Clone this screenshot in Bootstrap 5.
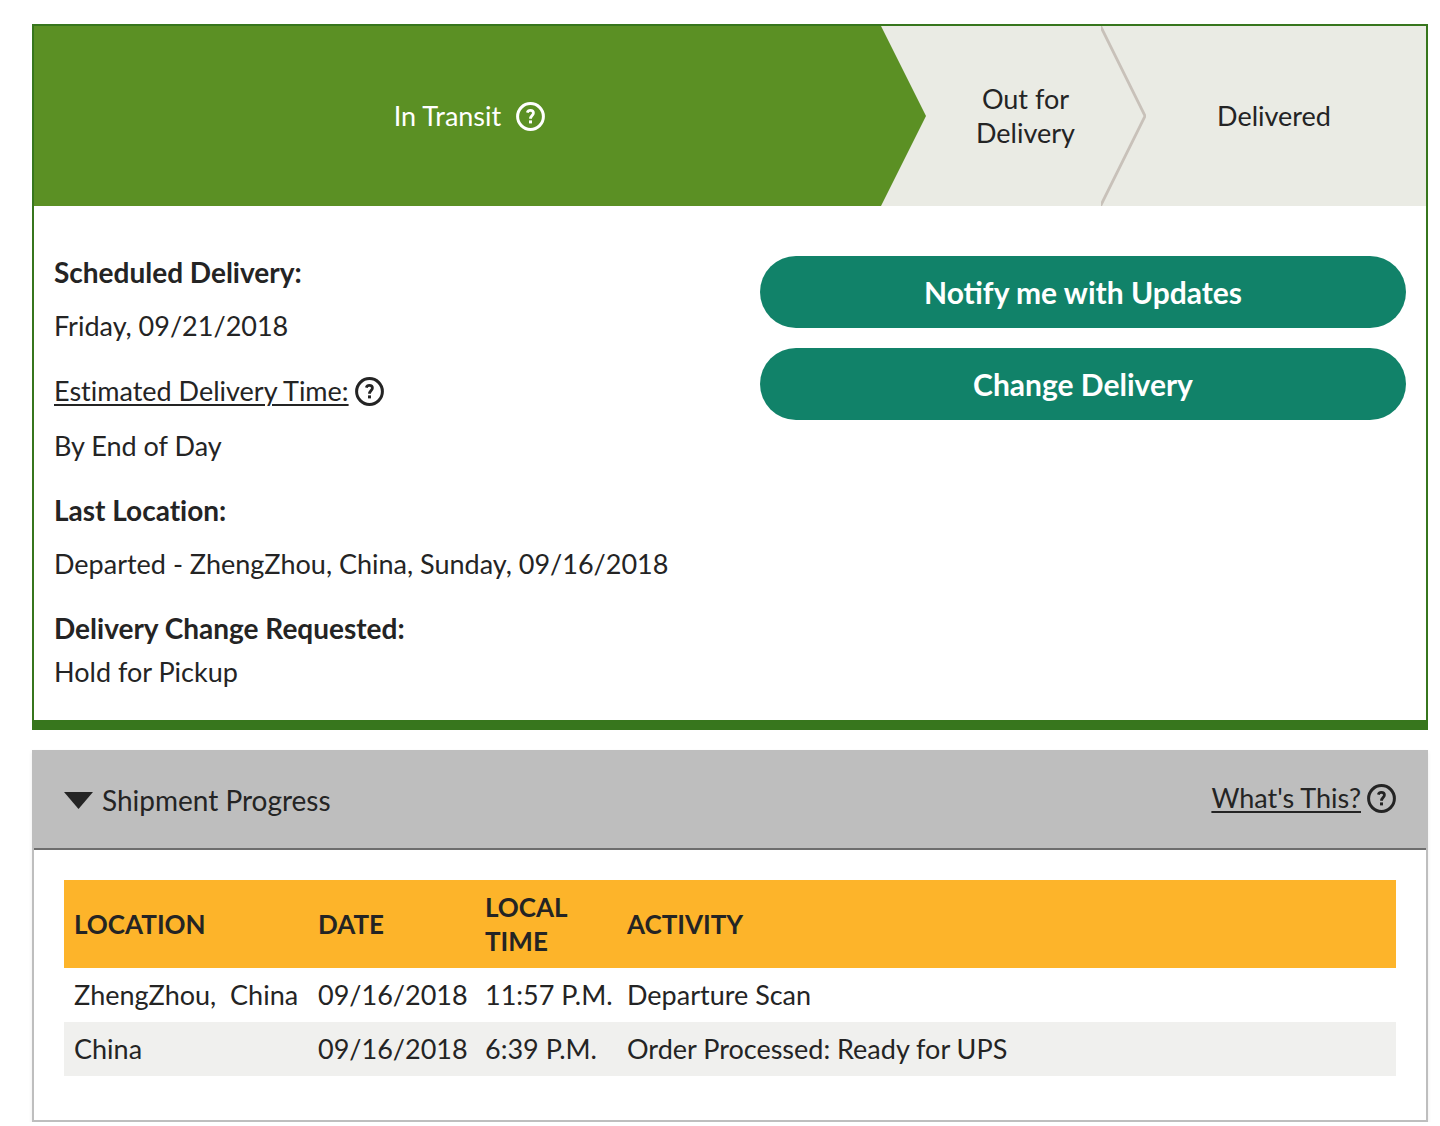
<!DOCTYPE html>
<html lang="en">
<head>
<meta charset="utf-8">
<meta name="viewport" content="width=device-width, initial-scale=1">
<title>Shipment tracking</title>
<link href="https://cdn.jsdelivr.net/npm/bootstrap@5.3.0/dist/css/bootstrap.min.css" rel="stylesheet">
<style>
  body { font-family: Lato, "Noto Sans", sans-serif; font-size: 27px; line-height: 34px; font-variant-ligatures: none; color: #242424; background: #fff; }
  .page-wrap { padding: 24px 12px 0 32px; }
  .status-card { border: 2px solid #37761d; border-bottom-width: 10px; }
  .steps { min-height: 180px; background: #eaebe4; }
  .step-current { flex: 823 1 0; padding-left: 24px; gap: 15px; background: #5b9024; color: #fff; }
  .step-next { flex: 151 1 0; padding-left: 24px; }
  .step-last { flex: 256 1 0; padding-right: 24px; }
  .chevron { flex: none; width: 45px; height: 180px; display: block; }
  .status-body { padding: 49px 20px 31px; gap: 60px; }
  .half { flex: 1 1 0; min-width: 0; }
  .details dt, .details dd { margin: 0; }
  .details dt { margin-bottom: 20px; font-size: 28px; font-weight: 700; }
  .details dd { margin-bottom: 30px; }
  .details .term-plain { font-size: 27px; font-weight: 400; }
  .details .term-close { margin-bottom: 10px; }
  .details dd:last-child { margin-bottom: 0; }
  .help-link { display: flex; align-items: center; gap: 6px; line-height: 36px; color: inherit; text-decoration: none; }
  .help-link span { text-decoration: underline; text-decoration-thickness: 2px; text-underline-offset: 3px; }
  .help-icon { width: 29px; height: 29px; flex: none; }
  .btn-track { --bs-btn-color: #fff; --bs-btn-bg: #118269; --bs-btn-hover-color: #fff; --bs-btn-hover-bg: #0c6853; --bs-btn-active-color: #fff; --bs-btn-active-bg: #0c6853;
    padding: 18px 24px; border: 0; font-size: 30px; line-height: 36px; font-weight: 700; }
  .actions { gap: 20px; padding-top: 1px; }
  .progress-panel { margin-top: 20px; border: 2px solid #bebebe; box-shadow: 0 2px 4px rgba(0,0,0,.08); }
  .panel-top { padding: 28px 30px 30px; background: #bebebe; border-bottom: 2px solid #6e6e6e; }
  .toggle-btn { padding: 2px 0 0; border: 0; background: none; color: inherit; gap: 9px; font-size: 28px; line-height: 36px; }
  .panel-content { padding: 30px 30px 44px; }
  .scan-table { width: 100%; table-layout: fixed; }
  .scan-table th, .scan-table td { padding: 10px; }
  .scan-table th { font-size: 26px; }
  .scan-table thead { background: #fdb42a; }
  .scan-table tbody tr:nth-child(even) { background: #f0f0ee; }
  .col-place { width: 244px; } .col-day { width: 167px; } .col-hour { width: 142px; }
</style>
<script src="https://cdn.jsdelivr.net/npm/bootstrap@5.3.0/dist/js/bootstrap.bundle.min.js"></script>
</head>
<body>
<svg class="d-none" aria-hidden="true">
  <symbol id="help" viewBox="0 0 29 29">
    <circle cx="14.5" cy="14.5" r="12.9" fill="none" stroke="currentColor" stroke-width="3"/>
    <path d="M11.3 10.600c.5-1.500 1.600-2.200 3-2.200 1.900 0 3.100 1 3.100 2.600 0 2.500-2.900 2.600-2.900 5.800" fill="none" stroke="currentColor" stroke-width="2.800"/>
    <path d="M13 18.400h3v3h-3z" fill="currentColor"/>
  </symbol>
</svg>
<main class="page-wrap">
  <section class="status-card">
    <div class="steps d-flex align-items-stretch text-center">
      <div class="step-current d-flex align-items-center justify-content-center">
        <span>In Transit</span>
        <svg class="help-icon" role="img" aria-label="Help"><use href="#help"/></svg>
      </div>
      <svg class="chevron" viewBox="0 0 45 180" aria-hidden="true"><path d="M0 0L45 90L0 180z" fill="#5b9024"/></svg>
      <div class="step-next d-flex align-items-center justify-content-center"><span>Out for<br>Delivery</span></div>
      <svg class="chevron" viewBox="0 0 45 180" aria-hidden="true"><path d="M-1 -1L44 90L-1 181" fill="none" stroke="#c8c1b9" stroke-width="2.800"/></svg>
      <div class="step-last d-flex align-items-center justify-content-center"><span>Delivered</span></div>
    </div>
    <div class="status-body d-flex">
      <dl class="details half mb-0">
        <dt>Scheduled Delivery:</dt>
        <dd>Friday, 09/21/2018</dd>
        <dt class="term-plain"><a class="help-link" href="#"><span>Estimated Delivery Time:</span><svg class="help-icon" aria-hidden="true"><use href="#help"/></svg></a></dt>
        <dd>By End of Day</dd>
        <dt>Last Location:</dt>
        <dd class="text-nowrap">Departed - ZhengZhou, China, Sunday, 09/16/2018</dd>
        <dt class="term-close">Delivery Change Requested:</dt>
        <dd>Hold for Pickup</dd>
      </dl>
      <div class="actions half d-flex flex-column">
        <button type="button" class="btn btn-track rounded-pill">Notify me with Updates</button>
        <button type="button" class="btn btn-track rounded-pill">Change Delivery</button>
      </div>
    </div>
  </section>

  <section class="progress-panel">
    <div class="panel-top d-flex justify-content-between align-items-start">
      <button type="button" class="toggle-btn d-flex align-items-center" data-bs-toggle="collapse" data-bs-target="#scans" aria-expanded="true" aria-controls="scans">
        <svg width="29" height="17" viewBox="0 0 29 17" aria-hidden="true"><path d="M0 0h29L14.500 17z" fill="currentColor"/></svg>
        <span>Shipment Progress</span>
      </button>
      <a class="help-link" href="#"><span>What's This?</span><svg class="help-icon" aria-hidden="true"><use href="#help"/></svg></a>
    </div>
    <div class="collapse show" id="scans">
      <div class="panel-content">
        <table class="scan-table">
          <colgroup><col class="col-place"><col class="col-day"><col class="col-hour"><col></colgroup>
          <thead>
            <tr><th scope="col">LOCATION</th><th scope="col">DATE</th><th scope="col">LOCAL TIME</th><th scope="col">ACTIVITY</th></tr>
          </thead>
          <tbody class="text-nowrap">
            <tr><td>ZhengZhou,&nbsp; China</td><td>09/16/2018</td><td>11:57 P.M.</td><td>Departure Scan</td></tr>
            <tr><td>China</td><td>09/16/2018</td><td>6:39 P.M.</td><td>Order Processed: Ready for UPS</td></tr>
          </tbody>
        </table>
      </div>
    </div>
  </section>
</main>
</body>
</html>
